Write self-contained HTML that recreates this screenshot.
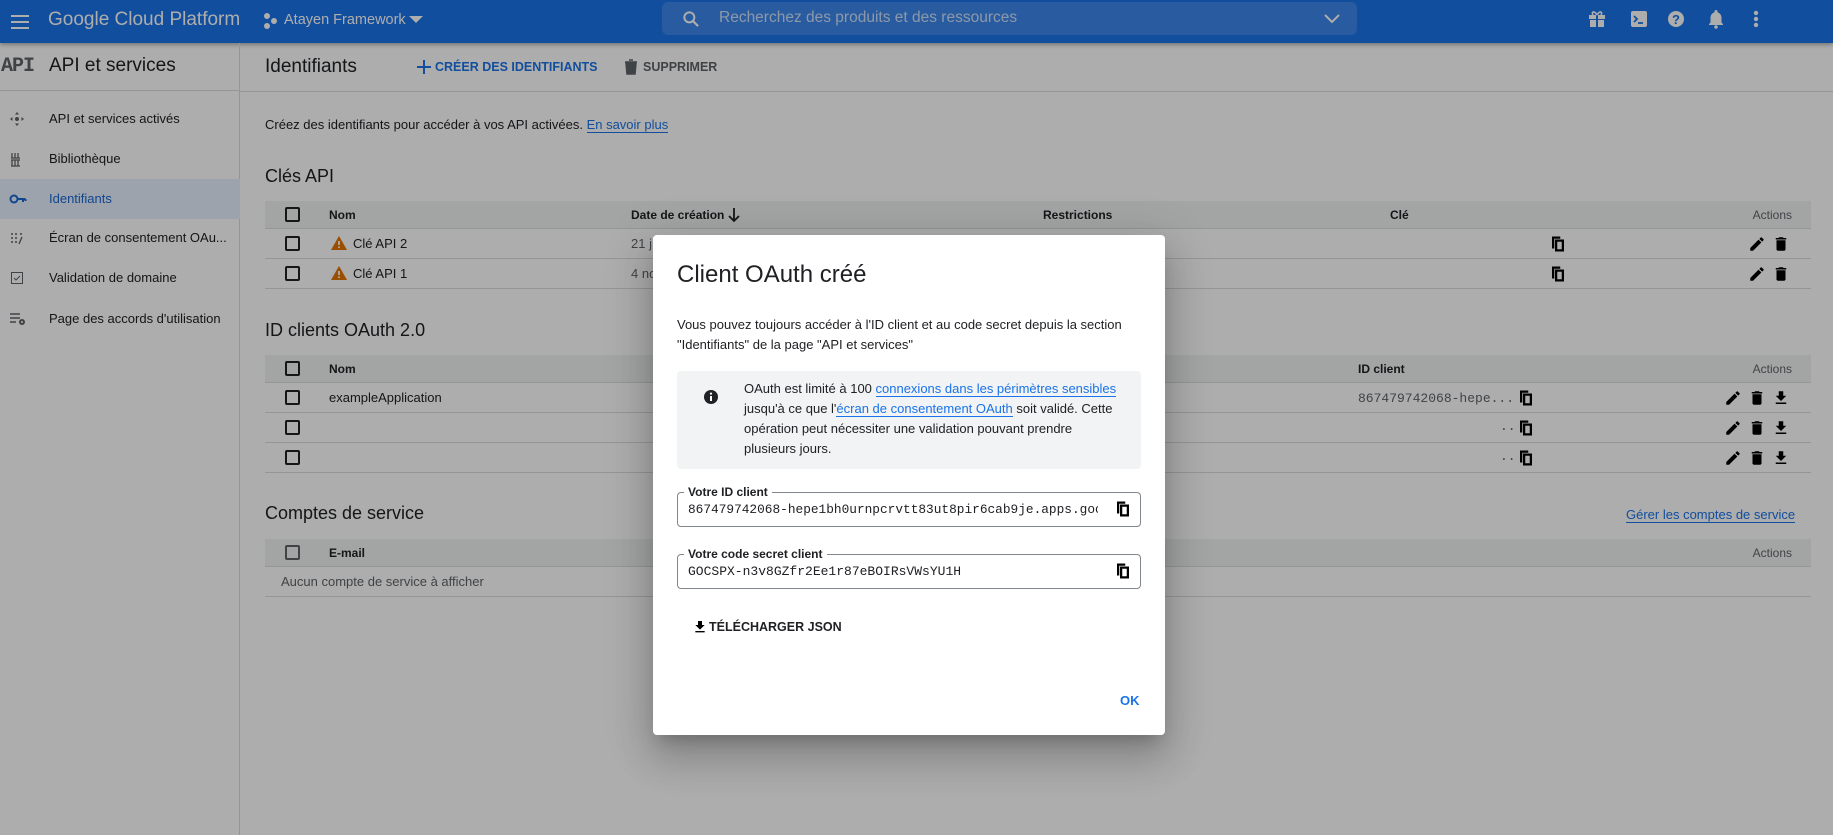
<!DOCTYPE html>
<html><head><meta charset="utf-8">
<style>
*{box-sizing:border-box;margin:0;padding:0}
body{width:1833px;height:835px;overflow:hidden;position:relative;background:#fff;font-family:"Liberation Sans",Arial,sans-serif;color:#202124}
.a{position:absolute;white-space:nowrap}
.hdr{position:absolute;left:0;top:0;width:1833px;height:43px;background:#1a73e8;box-shadow:0 2px 4px rgba(0,0,0,.3)}
.side{position:absolute;left:0;top:43px;width:240px;height:792px;border-right:1px solid #dadce0}
.nav{position:absolute;left:0;width:240px;height:40px;font-size:13px;line-height:40px;padding-left:49px;white-space:nowrap}
.nav svg{position:absolute;left:9px;top:12px}
.cb{position:absolute;width:15px;height:15px;border:2px solid #202124;border-radius:2px}
.th{position:absolute;left:265px;width:1546px;background:#f1f3f4;border-bottom:1px solid #dadce0;font-size:12px;font-weight:bold}
.tr{position:absolute;left:265px;width:1546px;border-bottom:1px solid #dadce0;font-size:13px}
.ov{position:absolute;left:0;top:0;width:1833px;height:835px;background:rgba(0,0,0,.32)}
.modal{position:absolute;left:653px;top:235px;width:512px;height:500px;background:#fff;border-radius:4px;box-shadow:0 11px 15px -7px rgba(0,0,0,.2),0 24px 38px 3px rgba(0,0,0,.14),0 9px 46px 8px rgba(0,0,0,.12)}
.lnk{color:#1a73e8;border-bottom:1px solid #1a73e8}
.mono{font-family:"Liberation Mono",monospace}
.fld{position:absolute;left:24px;width:464px;height:35px;border:1px solid #80868b;border-radius:4px}
.fld .lb{position:absolute;left:6px;top:-9px;background:#fff;padding:0 4px;font-size:12px;font-weight:bold;line-height:16px;white-space:nowrap}
.fld .v{position:absolute;left:10px;top:9px;font-size:13px;line-height:16px;white-space:nowrap;overflow:hidden}
</style></head><body>
<div class="hdr">
 <svg class="a" style="left:8px;top:10px" width="24" height="24" viewBox="0 0 24 24"><path d="M3 6h18M3 12h18M3 18h18" stroke="#fff" stroke-width="2"/></svg>
 <div class="a" style="left:48px;top:9px;font-size:19px;color:#fff">Google Cloud Platform</div>
 <svg class="a" style="left:263px;top:12px" width="16" height="18" viewBox="0 0 16 18"><circle cx="4" cy="4" r="3" fill="#fff"/><circle cx="11" cy="9" r="3" fill="#fff"/><circle cx="4" cy="14" r="3" fill="#fff"/></svg>
 <div class="a" style="left:284px;top:12px;font-size:14.5px;color:#fff">Atayen Framework</div>
 <svg class="a" style="left:409px;top:16px" width="14" height="8"><path d="M0 0h14L7 7z" fill="#fff"/></svg>
 <div class="a" style="left:662px;top:2px;width:695px;height:33px;background:rgba(255,255,255,.15);border-radius:6px"></div>
 <svg class="a" style="left:681px;top:9px" width="20" height="20" viewBox="0 0 24 24"><circle cx="10" cy="10" r="6" stroke="#fff" stroke-width="2.4" fill="none"/><path d="M14.5 14.5l6 6" stroke="#fff" stroke-width="2.6"/></svg>
 <div class="a" style="left:719px;top:9px;font-size:15.5px;color:rgba(255,255,255,.75)">Recherchez des produits et des ressources</div>
 <svg class="a" style="left:1324px;top:14px" width="16" height="10"><path d="M1 1l7 7 7-7" stroke="#fff" stroke-width="2" fill="none"/></svg>
 <svg class="a" style="left:1588px;top:10px" width="18" height="18" viewBox="0 0 18 18"><rect x="1" y="5" width="16" height="4" fill="#fff"/><rect x="2" y="10" width="14" height="7" fill="#fff"/><rect x="8" y="4" width="2" height="14" fill="#1a73e8"/><path d="M9 5C6 0 3 2 5 5M9 5c3-5 6-3 4 0" stroke="#fff" stroke-width="1.6" fill="none"/></svg>
 <svg class="a" style="left:1630px;top:10px" width="18" height="18" viewBox="0 0 18 18"><rect x="1" y="1" width="16" height="16" rx="2" fill="#fff"/><path d="M4 6l3 3-3 3" stroke="#1a73e8" stroke-width="1.8" fill="none"/><path d="M8 13h5" stroke="#1a73e8" stroke-width="1.8"/></svg>
 <svg class="a" style="left:1667px;top:10px" width="18" height="18" viewBox="0 0 18 18"><circle cx="9" cy="9" r="8" fill="#fff"/><text x="9" y="14" font-size="13" font-weight="bold" text-anchor="middle" fill="#1a73e8" font-family="Liberation Sans">?</text></svg>
 <svg class="a" style="left:1708px;top:9px" width="16" height="20" viewBox="0 0 16 20"><path d="M8 1a1.5 1.5 0 011.5 1.5v.7C12 4 13.5 6 13.5 9v4.5L15 15v1H1v-1l1.5-1.5V9C2.5 6 4 4 6.5 3.2v-.7A1.5 1.5 0 018 1z" fill="#fff"/><circle cx="8" cy="18" r="1.8" fill="#fff"/></svg>
 <svg class="a" style="left:1753px;top:10px" width="6" height="18"><circle cx="3" cy="3" r="2.2" fill="#fff"/><circle cx="3" cy="9" r="2.2" fill="#fff"/><circle cx="3" cy="15" r="2.2" fill="#fff"/></svg>
</div>

<div class="side">
 <div class="a" style="left:0;top:0;width:240px;height:48px;border-bottom:1px solid #dadce0"></div>
 <div class="a mono" style="left:1px;top:12px;font-size:20px;font-weight:bold;color:#5f6368;letter-spacing:-1px">API</div>
 <div class="a" style="left:49px;top:12px;font-size:19px">API et services</div>
 <div class="nav" style="top:56px"><svg width="16" height="16" viewBox="0 0 16 16"><path d="M8 1l2 2.5H6zM8 15l-2-2.5h4zM1 8l2.5-2v4zM15 8l-2.5 2V6z" fill="#5f6368"/><circle cx="8" cy="8" r="2" fill="#5f6368"/></svg>API et services activés</div>
 <div class="nav" style="top:96px"><svg width="16" height="16" viewBox="0 0 16 16"><path d="M3 2v5M6 2v5M9 2v5M2 7h9M2 9h9M3 9v6M6 9v6M9 9v6M2 15h9" stroke="#5f6368" stroke-width="1.3"/></svg>Bibliothèque</div>
 <div class="nav" style="top:136px;background:#e8f0fe;color:#1967d2"><svg width="18" height="16" viewBox="0 0 18 16"><circle cx="5" cy="8" r="3.5" stroke="#1967d2" stroke-width="2" fill="none"/><path d="M8.5 8h8M14 8v3M16.5 8v2" stroke="#1967d2" stroke-width="2"/></svg>Identifiants</div>
 <div class="nav" style="top:175px"><svg width="16" height="16" viewBox="0 0 16 16"><g fill="#5f6368"><circle cx="3" cy="4" r="1"/><circle cx="7" cy="4" r="1"/><circle cx="12" cy="4" r="1"/><circle cx="3" cy="8" r="1"/><circle cx="7" cy="8" r="1"/><circle cx="3" cy="12" r="1"/><circle cx="7" cy="12" r="1"/></g><path d="M13 7l-3 7" stroke="#5f6368" stroke-width="1.3"/></svg>Écran de consentement OAu...</div>
 <div class="nav" style="top:215px"><svg width="16" height="16" viewBox="0 0 16 16"><rect x="2.5" y="2.5" width="11" height="11" stroke="#5f6368" fill="none"/><path d="M5 8l2 2 4-4" stroke="#5f6368" fill="none"/></svg>Validation de domaine</div>
 <div class="nav" style="top:256px"><svg width="18" height="16" viewBox="0 0 18 16"><path d="M1 3h10M1 7h10M1 11h6" stroke="#5f6368" stroke-width="1.4"/><circle cx="13" cy="11" r="3" fill="#5f6368"/><circle cx="13" cy="11" r="1" fill="#fff"/></svg>Page des accords d'utilisation</div>
</div>

<div class="a" style="left:240px;top:91px;width:1593px;height:1px;background:#dadce0"></div>
<div class="a" style="left:265px;top:56px;font-size:19px">Identifiants</div>
<svg class="a" style="left:416px;top:59px" width="16" height="16"><path d="M8 1v14M1 8h14" stroke="#1a73e8" stroke-width="2"/></svg>
<div class="a" style="left:435px;top:60px;font-size:12.5px;font-weight:bold;color:#1a73e8">CRÉER DES IDENTIFIANTS</div>
<svg class="a" style="left:624px;top:59px" width="14" height="16" viewBox="0 0 14 16"><path d="M1 3h12M5 1h4M2 4h10l-1 11H3z" stroke="#5f6368" fill="#5f6368" stroke-width="1.5"/></svg>
<div class="a" style="left:643px;top:60px;font-size:12.5px;font-weight:bold;color:#5f6368">SUPPRIMER</div>
<div class="a" style="left:265px;top:117px;font-size:13px">Créez des identifiants pour accéder à vos API activées. <span class="lnk">En savoir plus</span></div>

<div class="a" style="left:265px;top:166px;font-size:18px">Clés API</div>
<div class="th" style="top:201px;height:28px">
 <div class="cb" style="left:20px;top:6px"></div>
 <div class="a" style="left:64px;top:7px">Nom</div>
 <div class="a" style="left:366px;top:7px">Date de création</div>
 <svg class="a" style="left:462px;top:6px" width="14" height="16"><path d="M7 1v13M2 9l5 5 5-5" stroke="#202124" stroke-width="1.8" fill="none"/></svg>
 <div class="a" style="left:778px;top:7px">Restrictions</div>
 <div class="a" style="left:1125px;top:7px">Clé</div>
 <div class="a" style="right:19px;top:7px;font-weight:normal;color:#5f6368">Actions</div>
</div>
<div class="tr" style="top:229px;height:30px">
 <div class="cb" style="left:20px;top:7px"></div>
 <svg class="a" style="left:66px;top:7px" width="16" height="14"><path d="M8 0l8 14H0z" fill="#e37400"/><path d="M8 5v4" stroke="#fff" stroke-width="1.8"/><circle cx="8" cy="11.3" r="1" fill="#fff"/></svg>
 <div class="a" style="left:88px;top:7px">Clé API 2</div><div class="a" style="left:366px;top:7px;color:#5f6368">21 j</div>
</div>
<div class="tr" style="top:259px;height:30px">
 <div class="cb" style="left:20px;top:7px"></div>
 <svg class="a" style="left:66px;top:7px" width="16" height="14"><path d="M8 0l8 14H0z" fill="#e37400"/><path d="M8 5v4" stroke="#fff" stroke-width="1.8"/><circle cx="8" cy="11.3" r="1" fill="#fff"/></svg>
 <div class="a" style="left:88px;top:7px">Clé API 1</div><div class="a" style="left:366px;top:7px;color:#5f6368">4 nov.</div>
</div>

<div class="a" style="left:265px;top:320px;font-size:18px">ID clients OAuth 2.0</div>
<div class="th" style="top:355px;height:28px">
 <div class="cb" style="left:20px;top:6px"></div>
 <div class="a" style="left:64px;top:7px">Nom</div>
 <div class="a" style="left:1093px;top:7px">ID client</div>
 <div class="a" style="right:19px;top:7px;font-weight:normal;color:#5f6368">Actions</div>
</div>
<div class="tr" style="top:383px;height:30px"><div class="cb" style="left:20px;top:7px"></div><div class="a" style="left:64px;top:7px">exampleApplication</div><div class="a mono" style="left:1093px;top:8px;font-size:13px;color:#5f6368">867479742068-hepe...</div></div>
<div class="tr" style="top:413px;height:30px"><div class="cb" style="left:20px;top:7px"></div></div>
<div class="tr" style="top:443px;height:30px"><div class="cb" style="left:20px;top:7px"></div></div>

<div class="a" style="left:265px;top:503px;font-size:18px">Comptes de service</div>
<div class="a" style="left:1626px;top:507px;font-size:13px"><span class="lnk">Gérer les comptes de service</span></div>
<div class="th" style="top:539px;height:28px">
 <div class="cb" style="left:20px;top:6px;border-color:#5f6368"></div>
 <div class="a" style="left:64px;top:7px">E-mail</div>
 <div class="a" style="right:19px;top:7px;font-weight:normal;color:#5f6368">Actions</div>
</div>
<div class="tr" style="top:567px;height:30px;color:#5f6368"><div class="a" style="left:16px;top:7px;font-size:13px">Aucun compte de service à afficher</div></div>

<svg width="0" height="0" style="position:absolute"><defs>
<symbol id="cp" viewBox="0 0 24 24"><path d="M4 2h11v3H7v13H4z"/><path d="M8 6h12v16H8zM11 9v10h6V9z" fill-rule="evenodd"/></symbol>
<symbol id="ed" viewBox="0 0 24 24"><path d="M3 17.25V21h3.75L17.81 9.94l-3.75-3.75L3 17.25zM20.71 7.040a1 1 0 000-1.41l-2.34-2.34a1 1 0 00-1.410 0l-1.83 1.83 3.75 3.75 1.83-1.83z"/></symbol>
<symbol id="dl" viewBox="0 0 24 24"><path d="M6 19c0 1.1.9 2 2 2h8c1.1 0 2-.9 2-2V7H6v12zM19 4h-3.5l-1-1h-5l-1 1H5v2h14V4z"/></symbol>
<symbol id="dw" viewBox="0 0 24 24"><path d="M19 9h-4V3H9v6H5l7 7 7-7zM5 18v2h14v-2H5z"/></symbol>
</defs></svg>
<svg class="a" style="left:1549px;top:235px" width="18" height="18"><use href="#cp"/></svg>
<svg class="a" style="left:1549px;top:265px" width="18" height="18"><use href="#cp"/></svg>
<svg class="a" style="left:1748px;top:235px" width="18" height="18"><use href="#ed"/></svg>
<svg class="a" style="left:1772px;top:235px" width="18" height="18"><use href="#dl"/></svg>
<svg class="a" style="left:1748px;top:265px" width="18" height="18"><use href="#ed"/></svg>
<svg class="a" style="left:1772px;top:265px" width="18" height="18"><use href="#dl"/></svg>
<svg class="a" style="left:1517px;top:389px" width="18" height="18"><use href="#cp"/></svg>
<svg class="a" style="left:1517px;top:419px" width="18" height="18"><use href="#cp"/></svg>
<svg class="a" style="left:1517px;top:449px" width="18" height="18"><use href="#cp"/></svg>
<div class="a mono" style="left:1500px;top:419px;font-size:13px;color:#5f6368">..</div>
<div class="a mono" style="left:1500px;top:449px;font-size:13px;color:#5f6368">..</div>
<svg class="a" style="left:1724px;top:389px" width="18" height="18"><use href="#ed"/></svg>
<svg class="a" style="left:1748px;top:389px" width="18" height="18"><use href="#dl"/></svg>
<svg class="a" style="left:1772px;top:389px" width="18" height="18"><use href="#dw"/></svg>
<svg class="a" style="left:1724px;top:419px" width="18" height="18"><use href="#ed"/></svg>
<svg class="a" style="left:1748px;top:419px" width="18" height="18"><use href="#dl"/></svg>
<svg class="a" style="left:1772px;top:419px" width="18" height="18"><use href="#dw"/></svg>
<svg class="a" style="left:1724px;top:449px" width="18" height="18"><use href="#ed"/></svg>
<svg class="a" style="left:1748px;top:449px" width="18" height="18"><use href="#dl"/></svg>
<svg class="a" style="left:1772px;top:449px" width="18" height="18"><use href="#dw"/></svg>

<div class="ov"></div>

<div class="modal">
 <div class="a" style="left:24px;top:26px;font-size:24px">Client OAuth créé</div>
 <div class="a" style="left:24px;top:80px;font-size:13px;line-height:20px">Vous pouvez toujours accéder à l'ID client et au code secret depuis la section<br>"Identifiants" de la page "API et services"</div>
 <div class="a" style="left:24px;top:136px;width:464px;height:98px;background:#f1f3f4;border-radius:4px">
  <svg class="a" style="left:26px;top:18px" width="16" height="16"><circle cx="8" cy="8" r="7" fill="#202124"/><rect x="7" y="7" width="2" height="5" fill="#fff"/><circle cx="8" cy="4.6" r="1.1" fill="#fff"/></svg>
  <div class="a" style="left:67px;top:8px;font-size:13px;line-height:20px">OAuth est limité à 100 <span class="lnk">connexions dans les périmètres sensibles</span><br>jusqu'à ce que l'<span class="lnk">écran de consentement OAuth</span> soit validé. Cette<br>opération peut nécessiter une validation pouvant prendre<br>plusieurs jours.</div>
 </div>
 <div class="fld" style="top:257px"><div class="lb">Votre ID client</div><div class="v mono" style="width:410px;font-size:12.8px">867479742068-hepe1bh0urnpcrvtt83ut8pir6cab9je.apps.googleusercontent.com</div>
  <svg class="a" style="left:436px;top:7px" width="18" height="18"><use href="#cp"/></svg></div>
 <div class="fld" style="top:319px"><div class="lb">Votre code secret client</div><div class="v mono">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</div>
  <svg class="a" style="left:436px;top:7px" width="18" height="18"><use href="#cp"/></svg></div>
 <svg class="a" style="left:39px;top:384px" width="16" height="16"><use href="#dw"/></svg>
 <div class="a" style="left:56px;top:385px;font-size:12.5px;font-weight:bold">TÉLÉCHARGER JSON</div>
 <div class="a" style="left:467px;top:458px;font-size:13px;font-weight:bold;color:#1a73e8">OK</div>
</div>
</body></html>
